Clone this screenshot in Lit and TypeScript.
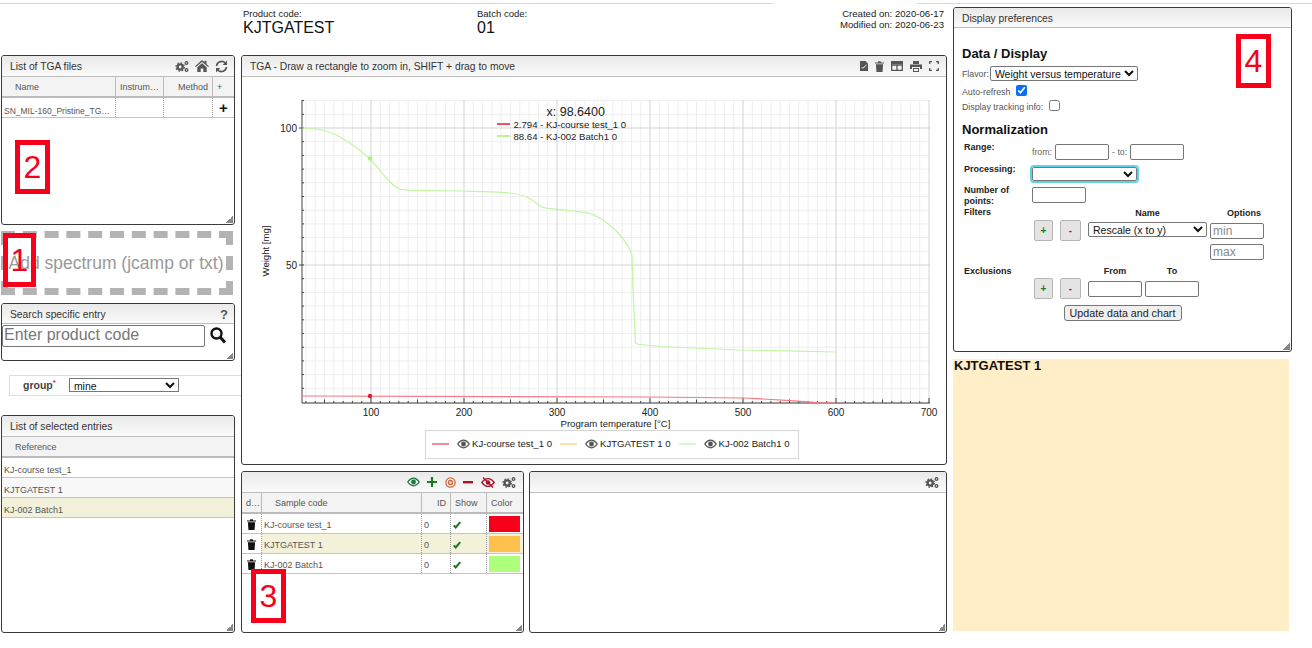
import { LitElement, html, css, svg } from "lit";
import { customElement } from "lit/decorators.js";

const gearsIcon = (c = "#555") => html`<svg class="ic" width="14" height="13" viewBox="0 0 14 13"><g fill="none" stroke=${c}><circle cx="5.2" cy="7" r="2.6" stroke-width="2.4"/><circle cx="5.2" cy="7" r="4.2" stroke-width="1.2" stroke-dasharray="1.6 1.7"/><circle cx="11.5" cy="3" r="1.3" stroke-width="1.3"/><circle cx="11.5" cy="10" r="1.3" stroke-width="1.3"/></g></svg>`;
const homeIcon = html`<svg class="ic" width="14" height="12" viewBox="0 0 14 12"><path fill="#555" d="M7 0 L9.5 2.2V.8h2v3.2L14 6.2l-.8.9L7 1.9.8 7.1 0 6.2zM2.3 7.3 7 3.3l4.7 4V12H8.3V8.6H5.7V12H2.3z"/></svg>`;
const refreshIcon = html`<svg class="ic" width="13" height="13" viewBox="0 0 13 13"><g fill="none" stroke="#555" stroke-width="1.7"><path d="M1.6 6A5 5 0 0 1 10.2 3"/><path d="M11.4 7A5 5 0 0 1 2.8 10"/></g><path fill="#555" d="M12 .6V5H7.6zM1 12.4V8h4.4z"/></svg>`;
const trash = (c = "#111") => html`<svg class="ic" width="9" height="11" viewBox="0 0 10 12"><path fill=${c} d="M0 1.5h3.2L3.7.3h2.6l.5 1.2H10v1.3H0zM1 3.6h8l-.6 8.4H1.6z"/></svg>`;
const eyeIcon = (c: string, w = 13) => html`<svg class="ic" width=${w} height="10" viewBox="0 0 14 10"><path fill="none" stroke=${c} stroke-width="1.4" d="M.8 5C3 1.8 5 .9 7 .9s4 .9 6.2 4.1C11 8.2 9 9.1 7 9.1S3 8.2.8 5z"/><circle cx="7" cy="5" r="2.6" fill=${c}/></svg>`;

const panelHead = (title: string, tools: unknown = "") =>
  html`<div class="head"><span class="title">${title}</span><span class="tools">${tools}</span></div>`;
const grip = html`<span class="grip"></span>`;
const check = html`<svg width="8" height="8" viewBox="0 0 10 9"><path fill="none" stroke="#1f7a1f" stroke-width="2.6" d="M1 5l2.4 2.6L9 1"/></svg>`;

const vminor: number[] = [];
const vmid: number[] = [];
for (let v = 30; v <= 700; v += 10) {
  if (v % 100 === 0) continue;
  const x = 371 + (v - 100) * 0.93;
  vminor.push(x);
  if (v % 50 === 0) vmid.push(x);
}
const hminor: number[] = [];
for (let v = 5; v <= 110; v += 5) if (v % 50) hminor.push(402 - v * 2.74);

function chart() {
  const xs = [100, 200, 300, 400, 500, 600, 700];
  const X = (v: number) => 371 + (v - 100) * 0.93;
  const ox = 242, oy = 77;
  return html`<svg class="chart" width="704" height="387" viewBox="${ox} ${oy} 704 387">
    ${vminor.map((x) => svg`<line x1=${x} x2=${x} y1="100" y2="403" stroke="#eeeeee"/>`)}
    ${hminor.map((y) => svg`<line x1="302" x2="930" y1=${y} y2=${y} stroke="#eeeeee"/>`)}
    ${xs.map((v) => svg`<line x1=${X(v)} x2=${X(v)} y1="100" y2="403" stroke="#d3d3d3"/>`)}
    ${[128, 265].map((y) => svg`<line x1="302" x2="930" y1=${y} y2=${y} stroke="#d3d3d3"/>`)}
    <line x1="302" x2="302" y1="100" y2="403" stroke="#444"/>
    <line x1="302" x2="930" y1="403" y2="403" stroke="#333"/>
    ${hminor.map((y) => svg`<line x1="302" x2="304" y1=${y} y2=${y} stroke="#444"/>`)}
    ${[128, 265].map((y) => svg`<line x1="299" x2="304" y1=${y} y2=${y} stroke="#444"/>`)}
    ${vminor.map((x) => svg`<line x1=${x} x2=${x} y1="401" y2="403" stroke="#444"/>`)}
    ${vmid.map((x) => svg`<line x1=${x} x2=${x} y1="399.5" y2="403" stroke="#444"/>`)}
    ${xs.map((v) => svg`<line x1=${X(v)} x2=${X(v)} y1="398" y2="403" stroke="#444"/>`)}
    <path fill="none" stroke="#c2f5a4" stroke-width="1.2" d="M302 128 C315 128 330 131 340 137 C350 143 360 149 370 159 C378 167 384 176 390 182 C394 186 397 188 400 189 C403 190 406 190 410 190.3 L460 191 C480 191.5 500 191.5 510 193 C518 194 522 195 527 197 C533 200 538 205 542 207 C545 208 548 208.5 550 208.7 L587 212.7 C592 214 598 217 603 220 C610 225 615 229 620 235 C626 242 630 248 632 255 L633 290 L635.5 343 C636 344 637 344.3 640 344.5 L660 346.5 L740 350 L836 352"/>
    <path fill="none" stroke="#f47a84" stroke-width="1.2" d="M302 396 L650 397 L743 398 C750 398 756 398.6 763 399 L790 400.7 L818 402.6 L836 403"/>
    <circle cx="370" cy="158.5" r="2.2" fill="#a5f07e"/>
    <circle cx="370" cy="396" r="2.2" fill="#f0152a"/>
    <g font-family="Liberation Sans, Arial, sans-serif" font-size="10" fill="#222">
      ${xs.map((v) => svg`<text x=${X(v)} y="415.5" text-anchor="middle">${v}</text>`)}
      <text x="297" y="131.5" text-anchor="end">100</text>
      <text x="297" y="268.5" text-anchor="end">50</text>
      <text x="615.5" y="426.5" font-size="9.6" text-anchor="middle">Program temperature [°C]</text>
      <text transform="translate(269 251) rotate(-90)" font-size="9.6" text-anchor="middle">Weight [mg]</text>
      <text x="546.5" y="116" font-size="12.5">x: 98.6400</text>
      <text x="513.5" y="128" font-size="9.6">2.794 - KJ-course test_1 0</text>
      <text x="513.5" y="140" font-size="9.6">88.64 - KJ-002 Batch1 0</text>
    </g>
    <line x1="497" x2="510" y1="124" y2="124" stroke="#f0152a" stroke-width="1.4"/>
    <line x1="497" x2="510" y1="136" y2="136" stroke="#a5f07e" stroke-width="1.4"/>
  </svg>`;
}

@customElement("app-root")
class AppRoot extends LitElement {
  static styles = css`
    :host { display: block; width: 1312px; height: 648px; overflow: hidden; position: relative; background: #fff;
      font-family: "Liberation Sans", Arial, sans-serif; color: #333; font-size: 10px; }
    * { box-sizing: border-box; }
    .page { display: grid; grid-template-columns: 234px 706px 338px; column-gap: 6px; padding: 0 0 0 1px; }
    .col { display: flex; flex-direction: column; }
    .topline { position: absolute; top: 3px; height: 1px; background: #d9d9d9; }
    .panel { border: 1px solid #3a3a3a; border-radius: 3px; position: relative; background: #fff; overflow: hidden; display: flex; flex-direction: column; }
    .head { height: 21px; flex: none; display: flex; align-items: center; justify-content: space-between; padding: 0 6px 0 8px;
      background: linear-gradient(#e9e9e9, #fafafa); border-bottom: 1px solid #bdbdbd; font-size: 10.3px; color: #333; }
    .tools { display: flex; align-items: center; gap: 6px; }
    .ic { display: block; flex: none; }
    .grip { position: absolute; right: 1px; bottom: 1px; width: 7px; height: 7px; background: linear-gradient(135deg, transparent 50%, #888 50%); }

    .files { height: 170px; margin-top: 55px; }
    .ghead { display: flex; height: 21px; background: #f3f3f3; border-bottom: 2px solid #bbb; font-size: 9px; color: #555; flex: none; }
    .ghead > div { display: flex; align-items: center; border-right: 1px solid #bbb; padding: 0 4px; white-space: nowrap; overflow: hidden; }
    .ghead > div:last-child { border-right: 0; }
    .grow { display: flex; height: 20px; border-bottom: 1px solid #c4c4c4; font-size: 9px; color: #555; align-items: center; flex: none; }
    .grow > div { height: 100%; display: flex; align-items: center; border-right: 1px dotted #999; padding: 3px 2px 0; white-space: nowrap; overflow: hidden; }
    .grow > div:last-child { border-right: 0; }
    .c-name { width: 114px; } .c-inst { width: 48px; } .c-meth { width: 49px; } .c-plus { flex: 1; }
    .grow > .fname { font-size: 8.5px; padding-top: 6px; }
    .grow > .plus { font-size: 15px; font-weight: bold; color: #111; justify-content: center; padding-top: 0; }
    .first { padding-left: 13px !important; }

    .drop { height: 64px; margin: 6px 0 0 0; width: 232px; border: 7px dashed #b3b3b3; padding-right: 2px; font-size: 17.5px; color: #999; display: flex; align-items: center; justify-content: center; white-space: nowrap; }
    .search { height: 58px; margin-top: 8px; }
    .search .head { height: 20px; padding-top: 1px; }
    .sform { display: flex; align-items: flex-start; padding: 1px 0 0 0; gap: 5px; }
    .sinput { width: 203px; height: 22px; border: 1px solid #777; border-radius: 2px; font-size: 16px; color: #777; padding: 0 1px 2px; font-family: inherit; }
    .sinput::placeholder { color: #777; opacity: 1; }
    .mag { margin-top: 2px; }
    .help { font-size: 13px; color: #555; font-weight: bold; }
    .groupbar { height: 21px; margin: 14px -7px 0 8px; border: 1px solid #ddd; border-right: 0; display: flex; align-items: center; padding: 0 0 2px 13px; font-size: 10.5px; font-weight: bold; color: #444; }
    .groupbar sup { color: #e0213c; font-size: 8px; line-height: 0; }
    .groupbar select { width: 110px; height: 14px; margin-left: 13px; font-size: 10.5px; font-family: inherit; padding: 0; border-radius: 0; }
    .selected { height: 218px; margin-top: 19px; }
    .selrow { height: 20px; border-bottom: 1px solid #c4c4c4; font-size: 9px; color: #555; display: flex; align-items: center; padding: 5px 0 0 2px; }
    .alt { background: #f8f8f8; } .hl { background: #f3f1da; }
    .fill { flex: 1; }

    .info { height: 55px; display: flex; padding: 8px 3px 0 2px; }
    .info .small { font-size: 9.5px; color: #222; line-height: 11px; }
    .info .big { font-size: 16px; color: #111; line-height: 17px; }
    .p { width: 234px; } .spacer { flex: 1; }
    .dates { text-align: right; font-size: 9.6px; color: #222; line-height: 11px; }
    .tga { height: 410px; }
    .tga .tools { gap: 7px; padding-right: 1px; }
    .chartbox { flex: 1; position: relative; }
    .chart { display: block; }
    .legend { position: absolute; left: 183px; top: 353px; width: 374px; height: 29px; border: 1px solid #d6d6d6; display: flex; align-items: center; font-size: 9.6px; color: #222; padding: 0 0 2px 6px; white-space: nowrap; }
    .legend .ln { width: 17px; height: 2px; margin-right: 8px; flex: none; }
    .legend .ic { margin-right: 2px; }
    .legend .txt { margin-right: 8px; flex: none; }
    .bottom { display: flex; gap: 5px; margin-top: 6px; }
    .samples { width: 283px; height: 162px; }
    .empty { flex: 1; height: 162px; }
    .samples .head, .empty .head { justify-content: flex-end; padding-right: 7px; }
    .samples .tools { gap: 7.4px; }
    .c-d { width: 20px; } .c-sc { width: 160px; } .c-id { width: 29px; } .c-sh { width: 36px; } .c-co { flex: 1; }
    .samples .grow > div.c-d { padding: 1px 0 0; justify-content: center; }
    .swatch { height: 16px; width: 31px; display: block; }
    .samples .grow > div.c-co { padding: 1px 2px 0; }
    .r { justify-content: flex-end; }

    .prefs { height: 345px; margin-top: 7px; width: 339px; }
    .prefs .head { height: 20px; padding-top: 1px; }
    .prefbody { padding: 0 8px; color: #222; font-size: 8.8px; display: grid; grid-template-columns: 70px 1fr; align-content: start; }
    h3 { margin: 0; font-size: 13px; color: #111; grid-column: 1 / -1; line-height: 15px; }
    .h1 { margin-top: 18px; }
    .h2 { margin-top: 8px; margin-bottom: 5px; }
    .full { grid-column: 1 / -1; display: flex; align-items: center; color: #555; height: 15px; }
    .flavor { margin-top: 5px; }
    .auto { margin-top: 3px; }
    .prefbody b { padding-left: 2px; color: #222; font-size: 9px; line-height: 11px; }
    input.t { width: 54px; height: 16px; border: 1px solid #767676; border-radius: 2px; padding: 0 2px; font-size: 12px; font-family: inherit; flex: none; }
    input.t::placeholder { color: #8a8a8a; opacity: 1; }
    select { font-family: inherit; color: #111; background: #fff; border: 1px solid #767676; border-radius: 2px; }
    .sel-flavor { margin-left: 1px; width: 148px; height: 15px; font-size: 10.5px; padding: 0; }
    .sel-proc { width: 105px; height: 14px; outline: 2px solid #5fd2ea; display: block; margin-top: 7px; }
    .sel-filter { width: 119px; height: 15px; margin: 2px 0 0 7px; font-size: 10.5px; padding: 0; }
    input[type=checkbox] { width: 11px; height: 11px; margin: -2px 0 0 6px; accent-color: #0b6ff5; }
    .rng { display: flex; align-items: center; gap: 3px; color: #666; height: 16px; margin-top: 2px; }
    .b-proc { margin-top: 4px; } .b-num { margin-top: 4px; } .num { margin-top: 6px; }
    .b-ex { margin-top: 6px; } .ex { margin-top: 5px; }
    .btn { height: 21px; background: #e4e4e4; border: 1px solid #b5b5b5; border-radius: 2px; display: flex; align-items: center; justify-content: center; font-size: 10px; font-weight: bold; flex: none; }
    .add { width: 19px; margin-left: 2px; color: #1f7a1f; }
    .del { width: 21px; margin-left: 7px; color: #d3122e; }
    .fl { display: flex; align-items: flex-start; height: 21px; }
    .cols { display: flex; font-weight: bold; font-size: 9px; text-align: center; color: #222; line-height: 11px; height: 13px; padding-top: 1px; }
    .cname { margin-left: 56px; width: 119px; }
    .copt { margin-left: 10px; width: 54px; }
    .cfrom { margin-left: 56px; width: 54px; }
    .cto { margin-left: 3px; width: 54px; }
    .fmin { margin: 3px 0 0 3px; }
    .fmax { margin: 3px 0 0 178px; display: block; }
    .efrom { margin: 3px 0 0 7px; }
    .eto { margin: 3px 0 0 3px; }
    .upd { grid-column: 1 / -1; display: flex; justify-content: center; margin-top: 6px; }
    .update { height: 16px; width: 118px; padding: 0; font-size: 10.7px; font-family: inherit; background: #efefef; border: 1px solid #767676; border-radius: 3px; color: #222; }
    .note { height: 272px; margin-top: 7px; width: 336px; background: #ffeec8; font-size: 13px; font-weight: bold; color: #111; padding: 0 1px; line-height: 14px; }

    .mark { position: absolute; border: 5px solid #f6001c; color: #f6001c; display: flex; align-items: center; justify-content: center; font-size: 32px; font-weight: 400; line-height: 1; background: #fff; }
    .mark.clear { background: transparent; }
    .m2 { left: 15px; top: 140px; width: 35px; height: 54px; }
    .m1 { left: 3px; top: 233px; width: 33px; height: 54px; }
    .m3 { left: 251px; top: 569px; width: 35px; height: 54px; }
    .m4 { left: 1236px; top: 34px; width: 35px; height: 54px; }
    .tl1 { left: 0; width: 773px; }
    .tl2 { left: 917px; width: 395px; }
    .l-red { background: #f58b93; }
    .l-orange { background: #ffe0ae; }
    .l-green { background: #dcf8c9; }
  `;

  render() {
    return html`
      <div class="topline tl1"></div>
      <div class="topline tl2"></div>
      <div class="page">
        <div class="col">
          <section class="panel files">
            ${panelHead("List of TGA files", html`${gearsIcon()}${homeIcon}${refreshIcon}`)}
            <div class="ghead"><div class="c-name first">Name</div><div class="c-inst">Instrum…</div><div class="c-meth r">Method</div><div class="c-plus">+</div></div>
            <div class="grow"><div class="c-name fname">SN_MIL-160_Pristine_TG…</div><div class="c-inst"></div><div class="c-meth"></div><div class="c-plus plus">+</div></div>
            ${grip}
          </section>
          <div class="drop">Add spectrum (jcamp or txt)</div>
          <section class="panel search">
            ${panelHead("Search specific entry", html`<b class="help">?</b>`)}
            <div class="sform"><input class="sinput" placeholder="Enter product code" />
              <svg class="mag" width="16" height="17" viewBox="0 0 16 17"><circle cx="6.5" cy="6.5" r="5" fill="none" stroke="#111" stroke-width="2.4"/><path d="M10 10l5 5.5" stroke="#111" stroke-width="3"/></svg></div>
            ${grip}
          </section>
          <div class="groupbar"><span>group<sup>*</sup></span><select><option>mine</option></select></div>
          <section class="panel selected">
            ${panelHead("List of selected entries")}
            <div class="ghead"><div class="first fill">Reference</div></div>
            <div class="selrow">KJ-course test_1</div>
            <div class="selrow alt">KJTGATEST 1</div>
            <div class="selrow hl">KJ-002 Batch1</div>
            ${grip}
          </section>
        </div>

        <div class="col">
          <div class="info">
            <div class="p"><div class="small">Product code:</div><div class="big">KJTGATEST</div></div>
            <div><div class="small">Batch code:</div><div class="big">01</div></div>
            <div class="spacer"></div>
            <div class="dates">Created on: 2020-06-17<br />Modified on: 2020-06-23</div>
          </div>
          <section class="panel tga">
            <div class="head"><span class="title">TGA - Draw a rectangle to zoom in, SHIFT + drag to move</span>
              <span class="tools">
                <svg class="ic" width="8" height="10" viewBox="0 0 8 10"><path fill="#555" d="M0 0h5.5L8 2.5V10H0z"/><path stroke="#eee" fill="none" d="M1.5 6l1.3 1.3L6.5 4"/></svg>
                ${trash("#555")}
                <svg class="ic" width="12" height="10" viewBox="0 0 12 10"><path fill="none" stroke="#555" stroke-width="1.3" d="M.7.7h10.6v8.6H.7zM.7 4h10.6M6 4v5.3"/><rect width="12" height="3" fill="#555"/></svg>
                <svg class="ic" width="12" height="11" viewBox="0 0 12 11"><path fill="#555" d="M3 0h6v3H3zM0 3.5h12V8h-2V6H2v2H0zM3 7h6v4H3z"/><path fill="#f4f4f4" d="M4 8h4v2H4z"/></svg>
                <svg class="ic" width="10" height="10" viewBox="0 0 10 10"><path fill="none" stroke="#555" stroke-width="1.3" d="M.7 3V.7H3M7 .7h2.3V3M9.3 7v2.3H7M3 9.3H.7V7"/></svg>
              </span></div>
            <div class="chartbox">${chart()}
              <div class="legend">
                <span class="ln l-red"></span>${eyeIcon("#555")}<span class="txt">KJ-course test_1 0</span>
                <span class="ln l-orange"></span>${eyeIcon("#555")}<span class="txt">KJTGATEST 1 0</span>
                <span class="ln l-green"></span>${eyeIcon("#555")}<span>KJ-002 Batch1 0</span>
              </div>
            </div>
          </section>
          <div class="bottom">
            <section class="panel samples">
              <div class="head"><span class="tools">
                ${eyeIcon("#1f7a3a")}
                <svg class="ic" width="10" height="10" viewBox="0 0 10 10"><path stroke="#1f7a1f" stroke-width="2.2" d="M5 0v10M0 5h10"/></svg>
                <svg class="ic" width="11" height="11" viewBox="0 0 11 11"><circle cx="5.5" cy="5.5" r="4.6" fill="none" stroke="#c8693a" stroke-width="1.3"/><circle cx="5.5" cy="5.5" r="2" fill="none" stroke="#c8693a" stroke-width="1.3"/></svg>
                <svg class="ic" width="10" height="3" viewBox="0 0 10 3"><rect width="10" height="2.4" fill="#b01226"/></svg>
                <svg class="ic" width="14" height="11" viewBox="0 0 14 11"><path fill="none" stroke="#a8122a" stroke-width="1.3" d="M.8 5.5C3 2.5 5 1.6 7 1.6s4 .9 6.2 3.9C11 8.5 9 9.4 7 9.4S3 8.5.8 5.5z"/><circle cx="7" cy="5.5" r="2.3" fill="#a8122a"/><path stroke="#a8122a" stroke-width="1.4" d="M2 .5l10 10"/></svg>
                ${gearsIcon()}
              </span></div>
              <div class="ghead"><div class="c-d">d…</div><div class="c-sc first">Sample code</div><div class="c-id r">ID</div><div class="c-sh">Show</div><div class="c-co">Color</div></div>
              ${[["KJ-course test_1", "#f6001c", ""], ["KJTGATEST 1", "#ffc04d", "hl"], ["KJ-002 Batch1", "#aeff7c", ""]].map(([n, c, h]) => html`
                <div class="grow">
                  <div class="c-d">${trash()}</div><div class="c-sc ${h}">${n}</div><div class="c-id ${h}">0</div><div class="c-sh ${h}">${check}</div><div class="c-co ${h}"><span class="swatch" style="background:${c}"></span></div>
                </div>`)}
              ${grip}
            </section>
            <section class="panel empty">
              <div class="head"><span class="tools">${gearsIcon()}</span></div>
              ${grip}
            </section>
          </div>
        </div>

        <div class="col">
          <section class="panel prefs">
            ${panelHead("Display preferences")}
            <div class="prefbody">
              <h3 class="h1">Data / Display</h3>
              <div class="full flavor">Flavor:<select class="sel-flavor"><option>Weight versus temperature</option></select></div>
              <div class="full auto">Auto-refresh<input type="checkbox" checked /></div>
              <div class="full">Display tracking info:<input type="checkbox" /></div>
              <h3 class="h2">Normalization</h3>
              <b>Range:</b>
              <div class="rng"><span>from:</span><input class="t" /><span>- to:</span><input class="t" /></div>
              <b class="b-proc">Processing:</b>
              <div><select class="sel-proc"></select></div>
              <b class="b-num">Number of points:</b>
              <div class="num"><input class="t" /></div>
              <b>Filters</b>
              <div>
                <div class="cols"><span class="cname">Name</span><span class="copt">Options</span></div>
                <div class="fl">
                  <span class="btn add">+</span><span class="btn del">-</span>
                  <select class="sel-filter"><option>Rescale (x to y)</option></select>
                  <input class="t fmin" placeholder="min" />
                </div>
                <input class="t fmax" placeholder="max" />
              </div>
              <b class="b-ex">Exclusions</b>
              <div class="ex">
                <div class="cols"><span class="cfrom">From</span><span class="cto">To</span></div>
                <div class="fl">
                  <span class="btn add">+</span><span class="btn del">-</span>
                  <input class="t efrom" /><input class="t eto" />
                </div>
              </div>
              <div class="upd"><button class="update">Update data and chart</button></div>
            </div>
            ${grip}
          </section>
          <div class="note">KJTGATEST 1</div>
        </div>
      </div>
      <div class="mark m2">2</div>
      <div class="mark clear m1">1</div>
      <div class="mark m3">3</div>
      <div class="mark m4">4</div>
    `;
  }
}
